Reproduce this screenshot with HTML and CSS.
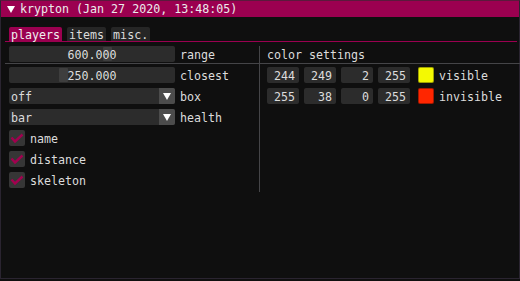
FILE: index.html
```html
<!DOCTYPE html>
<html lang="en">
<head>
    <meta charset="UTF-8">
    <title>krypton</title>
    <link rel="stylesheet" href="styles.css">
</head>
<body>
    <div class="window">
        <div class="titlebar">
            <svg class="collapse" width="8" height="7" viewBox="0 0 8 7"><polygon points="0,0 8,0 4,7" fill="#ffffff"/></svg>
            <span>krypton (Jan 27 2020, 13:48:05)</span>
        </div>
        <div class="content">
            <div class="tabbar">
                <div class="tab active">players</div>
                <div class="tab">items</div>
                <div class="tab">misc.</div>
            </div>
            <div class="columns">
                <div class="vline"></div>
                <div class="hline"></div>

                <div class="left-top">
                    <div class="row">
                        <div class="slider">
                            <div class="grab" style="margin-left: 94px"></div>
                            <span class="value">600.000</span>
                        </div>
                        <span class="label">range</span>
                    </div>
                </div>
                <div class="right-top">color settings</div>

                <div class="left">
                    <div class="row">
                        <div class="slider">
                            <div class="grab" style="margin-left: 50px"></div>
                            <span class="value">250.000</span>
                        </div>
                        <span class="label">closest</span>
                    </div>
                    <div class="row">
                        <div class="combo">
                            <span class="combo-text">off</span>
                            <div class="combo-btn"><svg width="8" height="7" viewBox="0 0 8 7"><polygon points="0,0 8,0 4,7" fill="#ffffff"/></svg></div>
                        </div>
                        <span class="label">box</span>
                    </div>
                    <div class="row">
                        <div class="combo">
                            <span class="combo-text">bar</span>
                            <div class="combo-btn"><svg width="8" height="7" viewBox="0 0 8 7"><polygon points="0,0 8,0 4,7" fill="#ffffff"/></svg></div>
                        </div>
                        <span class="label">health</span>
                    </div>
                    <div class="row">
                        <div class="checkbox"><svg width="16" height="16" viewBox="0 0 16 16"><polyline points="2.5,7.5 6,11.5 13.5,4.5" fill="none" stroke="#a2004f" stroke-width="2.4"/></svg></div>
                        <span class="label">name</span>
                    </div>
                    <div class="row">
                        <div class="checkbox"><svg width="16" height="16" viewBox="0 0 16 16"><polyline points="2.5,7.5 6,11.5 13.5,4.5" fill="none" stroke="#a2004f" stroke-width="2.4"/></svg></div>
                        <span class="label">distance</span>
                    </div>
                    <div class="row">
                        <div class="checkbox"><svg width="16" height="16" viewBox="0 0 16 16"><polyline points="2.5,7.5 6,11.5 13.5,4.5" fill="none" stroke="#a2004f" stroke-width="2.4"/></svg></div>
                        <span class="label">skeleton</span>
                    </div>
                </div>

                <div class="right">
                    <div class="row">
                        <div class="num">244</div>
                        <div class="num">249</div>
                        <div class="num">2</div>
                        <div class="num">255</div>
                        <div class="swatch yellow"></div>
                        <span class="label">visible</span>
                    </div>
                    <div class="row">
                        <div class="num">255</div>
                        <div class="num">38</div>
                        <div class="num">0</div>
                        <div class="num">255</div>
                        <div class="swatch red"></div>
                        <span class="label">invisible</span>
                    </div>
                </div>
            </div>
        </div>
    </div>
</body>
</html>
```

FILE: styles.css
```css
body {
    margin: 0;
    background: #0f0f0f;
    font-family: "DejaVu Sans Mono", "Liberation Mono", monospace;
    font-size: 11.65px;
    color: #dcdcdc;
}
.window {
    width: 520px;
    height: 279px;
    box-sizing: border-box;
    border: 1px solid #2a2430;
    border-top-color: #5a1a3c;
    background: #0f0f0f;
}
.titlebar {
    height: 16px;
    background: #9b0050;
    display: flex;
    align-items: center;
    padding-left: 6px;
    color: #ececec;
    line-height: 16px;
}
.collapse {
    margin-right: 5px;
}
.content {
    padding: 10px 2px 0 4px;
}
.tabbar {
    display: flex;
    gap: 5px;
    padding-left: 4px;
    border-bottom: 1px solid #9b0050;
}
.tab {
    height: 14px;
    box-sizing: border-box;
    padding: 2px 2px 0;
    line-height: 12px;
    background: #262626;
    border-radius: 2px 2px 0 0;
}
.tab.active {
    background: #9b0050;
    color: #f0f0f0;
}
.columns {
    display: grid;
    grid-template-columns: 250px 1px 1fr;
    grid-template-rows: 16px 5px auto;
    margin-top: 4px;
    padding-left: 4px;
}
.vline {
    grid-column: 2;
    grid-row: 1 / 4;
    background: #454548;
}
.hline {
    grid-column: 1 / 4;
    grid-row: 2;
    margin: 1px -6px 3px -4px;
    height: 1px;
    background: #454548;
}
.left-top {
    grid-column: 1;
    grid-row: 1;
}
.right-top {
    grid-column: 3;
    grid-row: 1;
    padding: 2px 0 0 7px;
    line-height: 14px;
}
.left {
    grid-column: 1;
    grid-row: 3;
    display: flex;
    flex-direction: column;
    gap: 5px;
    padding-bottom: 4px;
}
.right {
    grid-column: 3;
    grid-row: 3;
    display: flex;
    flex-direction: column;
    gap: 5px;
    padding-left: 7px;
}
.row {
    display: flex;
    align-items: flex-start;
    height: 16px;
    line-height: 14px;
}
.slider {
    width: 166px;
    height: 16px;
    background: #2c2c2c;
    border-radius: 2px;
    display: flex;
    align-items: center;
    position: relative;
}
.grab {
    width: 9px;
    height: 14px;
    background: #3e3e3e;
    border-radius: 1px;
}
.value {
    position: absolute;
    top: 2px;
    left: 0;
    right: 0;
    text-align: center;
}
.label {
    margin-left: 5px;
    padding-top: 2px;
}
.combo {
    width: 166px;
    height: 16px;
    background: #2c2c2c;
    border-radius: 2px;
    display: flex;
}
.combo-text {
    flex: 1;
    padding: 2px 0 0 2px;
}
.combo-btn {
    width: 16px;
    height: 16px;
    background: #4c4c4c;
    border-radius: 0 2px 2px 0;
    display: flex;
    align-items: center;
    justify-content: center;
}
.checkbox {
    width: 16px;
    height: 16px;
    background: #363636;
    border-radius: 2px;
}
.checkbox svg {
    display: block;
}
.num {
    width: 32px;
    height: 16px;
    box-sizing: border-box;
    padding: 2px 4px 0 0;
    text-align: right;
    background: #2c2c2c;
    border-radius: 2px;
    margin-right: 5px;
}
.swatch {
    width: 16px;
    height: 16px;
    box-sizing: border-box;
    border-radius: 2px;
    margin-left: 3px;
    border: 1px solid rgba(0, 0, 0, 0.35);
}
.yellow {
    background: #f4f902;
}
.red {
    background: #ff2600;
}
```
